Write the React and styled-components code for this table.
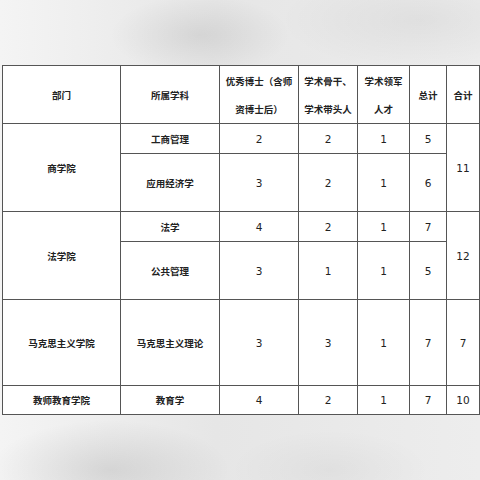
import React from "react";
import styled, { createGlobalStyle } from "styled-components";

const GlobalStyle = createGlobalStyle`
  html, body {
    margin: 0;
    padding: 0;
  }
  body {
    width: 480px;
    height: 480px;
    overflow: hidden;
    background: #ececec;
  }
`;

// Blurred photo backdrop behind the printed table
const Page = styled.div`
  width: 480px;
  height: 480px;
  box-sizing: border-box;
  padding: 65px 1px 0 2px;
  background:
    radial-gradient(ellipse 90px 40px at 200px 35px, rgba(0, 0, 0, 0.08), transparent),
    radial-gradient(ellipse 140px 50px at 420px 20px, rgba(0, 0, 0, 0.05), transparent),
    radial-gradient(ellipse 120px 50px at 110px 470px, rgba(0, 0, 0, 0.1), transparent),
    radial-gradient(ellipse 100px 40px at 330px 470px, rgba(0, 0, 0, 0.04), transparent),
    linear-gradient(90deg, #f4f4f4 0%, #e6e6e6 45%, #e9e9e9 70%, #ededed 100%);
`;

const Table = styled.table`
  border-collapse: collapse;
  table-layout: fixed;
  width: 477px;
  background: #fff;
  color: #222;
`;

const Cell = styled.td`
  border: 1px solid #555;
  padding: 0;
  height: ${(p) => p.h || 29}px;
  text-align: center;
  vertical-align: middle;
  font-family: ${(p) =>
    p.num
      ? '"DejaVu Sans", Verdana, sans-serif'
      : '"Noto Sans CJK SC", "Noto Sans", sans-serif'};
  font-size: ${(p) => (p.num ? 10.5 : 9.5)}px;
  font-weight: ${(p) => (p.num ? 400 : 700)};
  line-height: ${(p) => (p.tall ? 28 : 14)}px;
  white-space: nowrap;
  overflow: hidden;
`;

const cols = [118, 99, 79, 59, 52, 37, 33];

const rows = [
  { dept: "商学院", deptSpan: 2, subject: "工商管理", h: 29, vals: [2, 2, 1, 5], total: 11, totalSpan: 2 },
  { subject: "应用经济学", h: 57, vals: [3, 2, 1, 6] },
  { dept: "法学院", deptSpan: 2, subject: "法学", h: 29, vals: [4, 2, 1, 7], total: 12, totalSpan: 2 },
  { subject: "公共管理", h: 57, vals: [3, 1, 1, 5] },
  { dept: "马克思主义学院", deptSpan: 1, subject: "马克思主义理论", h: 85, vals: [3, 3, 1, 7], total: 7, totalSpan: 1 },
  { dept: "教师教育学院", deptSpan: 1, subject: "教育学", h: 28, vals: [4, 2, 1, 7], total: 10, totalSpan: 1 },
];

export default function App() {
  return (
    <>
      <GlobalStyle />
      <Page>
        <Table>
          <colgroup>
            {cols.map((w, i) => (
              <col key={i} style={{ width: w }} />
            ))}
          </colgroup>
          <thead>
            <tr>
              <Cell as="th" h={57}>部门</Cell>
              <Cell as="th" h={57}>所属学科</Cell>
              <Cell as="th" h={57} tall>
                优秀博士（含师
                <br />
                资博士后）
              </Cell>
              <Cell as="th" h={57} tall>
                学术骨干、
                <br />
                学术带头人
              </Cell>
              <Cell as="th" h={57} tall>
                学术领军
                <br />
                人才
              </Cell>
              <Cell as="th" h={57}>总计</Cell>
              <Cell as="th" h={57}>合计</Cell>
            </tr>
          </thead>
          <tbody>
            {rows.map((r, i) => (
              <tr key={i}>
                {r.dept && (
                  <Cell rowSpan={r.deptSpan} h={r.h}>
                    {r.dept}
                  </Cell>
                )}
                <Cell h={r.h}>{r.subject}</Cell>
                {r.vals.map((v, j) => (
                  <Cell key={j} num h={r.h}>
                    {v}
                  </Cell>
                ))}
                {r.total !== undefined && (
                  <Cell num rowSpan={r.totalSpan} h={r.h}>
                    {r.total}
                  </Cell>
                )}
              </tr>
            ))}
          </tbody>
        </Table>
      </Page>
    </>
  );
}
